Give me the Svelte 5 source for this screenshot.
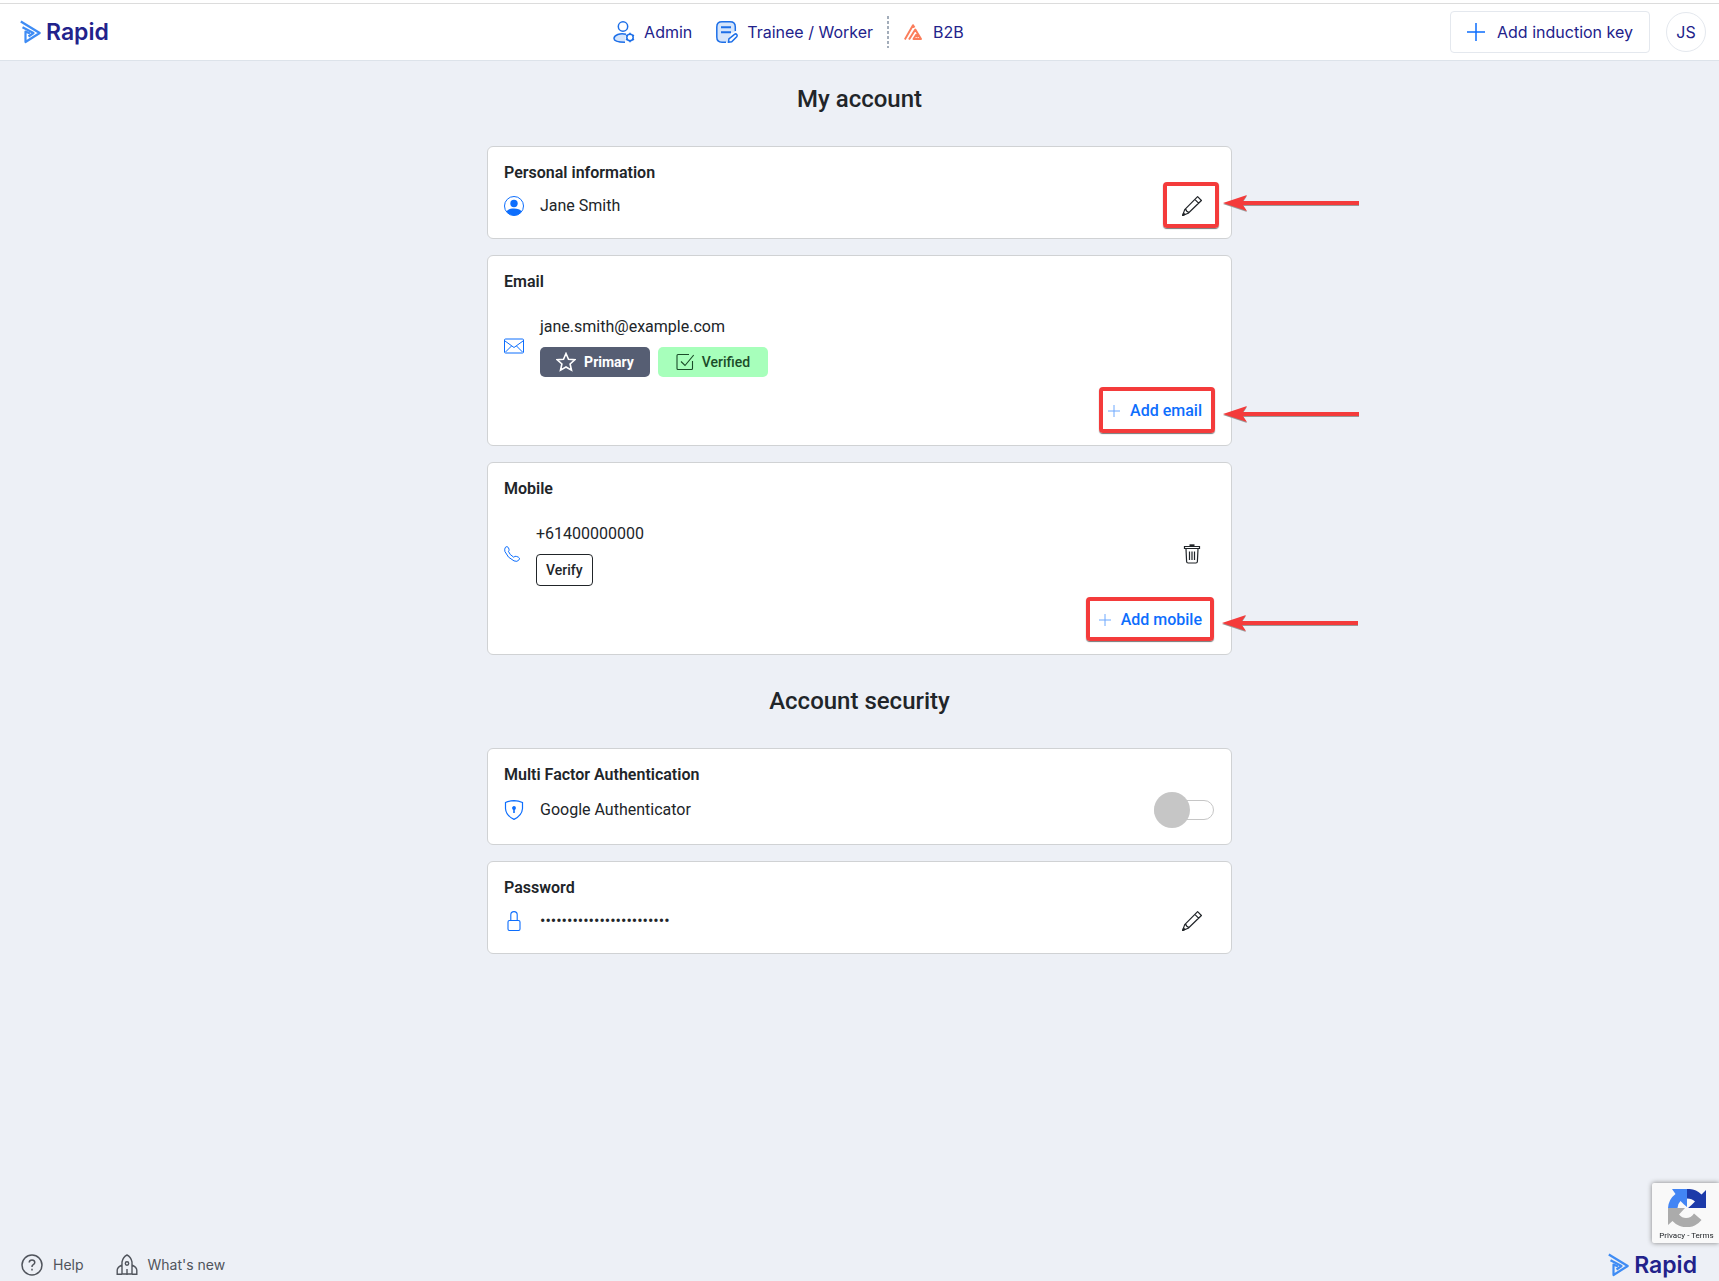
<script>
  let mfaEnabled = false;

  const user = {
    name: 'Jane Smith',
    initials: 'JS',
    email: 'jane.smith@example.com',
    mobile: '+61400000000',
  };
  const maskedPassword = '•'.repeat(24);
</script>

<svelte:head>
  <title>My account</title>
</svelte:head>

{#snippet logo()}
  <a class="logo" href="#home">
    <svg width="22" height="24" viewBox="0 0 22 24" fill="none" stroke="#3f8cf4" stroke-width="2.200" stroke-linejoin="round">
      <path d="M.8 1.500 19.700 13 5.500 22V11.500l4.500 2" />
      <path d="m2.500 7.300 11 5.700-5 3.500" />
    </svg>
    <span>Rapid</span>
  </a>
{/snippet}

{#snippet pencil()}
  <svg width="20" height="20" viewBox="0 0 20 20" fill="none" stroke="currentColor" stroke-width="1.200" stroke-linejoin="round">
    <path d="M15.600.7 19.400 4.500 6.200 17.300.7 19.400 2.700 13.600zM12.800 3.400l3.800 3.800M2.700 13.600l1.600.3.500 1.500 1.300.4.100 1.500" />
    <path d="m.7 19.400.8-2.300 1.400 1.400z" fill="currentColor" />
  </svg>
{/snippet}

{#snippet plus(size)}
  <svg width={size} height={size} viewBox="0 0 12 12" fill="none" stroke="currentColor" stroke-width="1">
    <path d="M6 0v12M0 6h12" />
  </svg>
{/snippet}

{#snippet arrow()}
  <svg class="arrow" width="136" height="20" viewBox="0 0 136 20" fill="#f43b3b">
    <path d="M0 10 24 2 20 8H136v4H20l4 6z" />
  </svg>
{/snippet}

<div class="page">
  <div class="strip"></div>
  <header>
    {@render logo()}
    <nav>
      <a href="#admin">
        <svg width="22" height="22" viewBox="0 0 22 22" fill="none" stroke="#1d6fe8" stroke-width="1.500">
          <circle cx="10" cy="5.500" r="4.700" />
          <path d="M13 13.200C7 11.600 1 14 1 17.500c0 2.600 3.500 3.700 11 3.700" fill="#d5e5fb" />
          <circle cx="17" cy="16.500" r="3.200" fill="#fff" />
          <path d="M17 11.800v1.500M17 19.700v1.500M13 14.200l1.300.7M19.700 18.100l1.300.8M13 18.900l1.300-.8M19.700 14.900l1.300-.7" />
        </svg>
        Admin
      </a>
      <a class="trainee" href="#trainee">
        <svg width="22" height="22" viewBox="0 0 22 22" fill="none" stroke="#1d6fe8" stroke-width="1.500">
          <path d="M19.300 11V6Q19.300.8 14 .8H6Q.8.8.8 6v10q0 5.200 5.200 5.200h6l3-9.200z" fill="#d5e5fb" stroke="none" />
          <path d="M19.300 10V6Q19.300.8 14 .8H6Q.8.8.8 6v10q0 5.200 5.200 5.200h4" />
          <path d="M5 6.200h10M5 11.200h10" stroke-width="2" />
          <path d="M18.500 13.400q1.300-1 2.200 0t0 2.300l-5 5-3.200.5.400-3.200z" fill="#fff" />
        </svg>
        Trainee / Worker
      </a>
      <span class="divider"></span>
      <a class="b2b" href="#b2b">
        <svg width="18" height="16" viewBox="0 0 18 16" fill="none" stroke="#fb7d5b" stroke-width="2" stroke-linejoin="round">
          <path d="M.8 15.500 9 1.200l1.500 2.300M5 15.500l6.300-10L17 15H9.500l2.700-4.200 1.600 2.700" />
        </svg>
        B2B
      </a>
    </nav>
    <div class="actions">
      <button class="induction" type="button">
        <span class="blue">{@render plus(18)}</span>
        Add induction key
      </button>
      <button class="avatar" type="button">{user.initials}</button>
    </div>
  </header>

  <main>
    <h1>My account</h1>

    <section class="card">
      <h2>Personal information</h2>
      <div class="row">
        <svg class="blue" width="20" height="20" viewBox="0 0 20 20" fill="currentColor">
          <circle cx="10" cy="10" r="9.500" fill="none" stroke="currentColor" />
          <circle cx="10" cy="7.500" r="3.700" />
          <path d="M2.500 15.500c1.200-2.200 4-3 7.500-3s6.300.8 7.500 3c-1.500 2.500-4.200 4-7.500 4s-6-1.500-7.500-4z" />
        </svg>
        <span>{user.name}</span>
        <button class="icon-button" type="button" aria-label="Edit name">{@render pencil()}</button>
      </div>
      <div class="callout name-callout">{@render arrow()}</div>
    </section>

    <section class="card">
      <h2>Email</h2>
      <div class="entry">
        <svg class="blue" width="20" height="16" viewBox="0 0 20 16" fill="none" stroke="currentColor">
          <rect x=".5" y="1" width="19" height="14" rx="1" />
          <path d="m1 3 9 6.500L19 3M1.500 14l6-6M18.500 14l-6-6" />
        </svg>
        <div>
          <div class="value">{user.email}</div>
          <div class="badges">
            <span class="badge primary">
              <svg width="20" height="20" viewBox="1 0 20 20" fill="none" stroke="currentColor" stroke-width="1.600">
                <path d="m11 1.500 2.500 5.700 6.300.6-4.700 4.200 1.400 6.200L11 15l-5.500 3.200L6.900 12 2.200 7.800l6.300-.6z" />
              </svg>
              Primary
            </span>
            <span class="badge verified">
              <svg width="18" height="18" viewBox="0 0 18 18" fill="none" stroke="currentColor" stroke-width="1.100">
                <path d="M13 1.500H2q-1 0-1 1v13q0 1 1 1h13.500q1 0 1-1V8M5 8.500l4 4L17.700 2" />
              </svg>
              Verified
            </span>
          </div>
        </div>
      </div>
      <div class="add-row">
        <button class="add" type="button">{@render plus(12)}Add email</button>
      </div>
      <div class="callout email-callout">{@render arrow()}</div>
    </section>

    <section class="card">
      <h2>Mobile</h2>
      <div class="entry">
        <svg class="blue" width="16" height="16" viewBox="0 0 16 16" fill="none" stroke="currentColor">
          <path d="M1.500 1.200Q3-.2 4.300 1.500L5 3.200Q5.500 4.400 4.400 5.300 5.500 8.800 9.800 11.300q1-1.500 2.500-.9l2 .7q2 1 .9 2.600-2 2.700-5.200 1.200Q3.500 12 .9 5.500.2 3 1.500 1.200z" />
        </svg>
        <div>
          <div class="value">{user.mobile}</div>
          <button class="verify" type="button">Verify</button>
        </div>
        <button class="icon-button" type="button" aria-label="Delete mobile">
          <svg width="20" height="20" viewBox="0 0 20 20" fill="none" stroke="currentColor" stroke-width="1.200">
            <path d="M2.500 2.500h15v2h-15zM4 5l.6 12.500q.1 1.500 1.500 1.500h7.800q1.400 0 1.500-1.500L16 5" />
            <path d="M7.500 1.300h5" stroke-width="2" />
            <path d="M7.500 7.500v8.500M10 7.500v8.500M12.500 7.500v8.500" />
          </svg>
        </button>
      </div>
      <div class="add-row">
        <button class="add" type="button">{@render plus(12)}Add mobile</button>
      </div>
      <div class="callout mobile-callout">{@render arrow()}</div>
    </section>

    <h1>Account security</h1>

    <section class="card">
      <h2>Multi Factor Authentication</h2>
      <div class="row tall">
        <svg class="blue" width="20" height="20" viewBox="0 0 20 20" fill="none" stroke="currentColor" stroke-width="1.200">
          <path d="M10 .7Q14.500.8 18.500 2.500v6Q18 15.500 10 19.400 2 15.500 1.500 8.500v-6Q5.500.8 10 .7z" />
          <circle cx="10" cy="8" r="1.300" fill="currentColor" />
          <path d="M10 8v5" stroke-width="1.600" />
        </svg>
        <label for="mfa">Google Authenticator</label>
        <input id="mfa" class="toggle" type="checkbox" bind:checked={mfaEnabled} />
      </div>
    </section>

    <section class="card">
      <h2>Password</h2>
      <div class="row">
        <svg class="blue" width="20" height="20" viewBox="0 0 20 20" fill="none" stroke="currentColor" stroke-width="1.100">
          <rect x="4" y="9.500" width="12" height="10" rx="1.500" />
          <path d="M6.800 9.500V3.800q0-3.200 3.200-3.200t3.200 3.200v5.700" />
        </svg>
        <span>{maskedPassword}</span>
        <button class="icon-button" type="button" aria-label="Edit password">{@render pencil()}</button>
      </div>
    </section>
  </main>

  <footer>
    <a class="foot-link" href="#help">
      <svg width="22" height="22" viewBox="0 0 22 22" fill="none" stroke="currentColor" stroke-width="1.500">
        <circle cx="11" cy="11" r="10" />
        <path d="M8.200 8.500Q8.400 6 11 6t2.800 2.300q0 1.500-1.500 2.300T11 13" />
        <path d="M11 14.800v1.600" />
      </svg>
      Help
    </a>
    <a class="foot-link" href="#news">
      <svg width="22" height="22" viewBox="0 0 22 22" fill="none" stroke="currentColor" stroke-width="1.400">
        <path d="M6 20V8q1-5 5-7 4 2 5 7v12zM6 11q-4.500 2-4.800 5v4.200H6M16 11q4.500 2 4.800 5v4.200H16" />
        <circle cx="11" cy="9.500" r="1.700" />
        <path d="M11 15v6" />
      </svg>
      What's new
    </a>
    {@render logo()}
  </footer>

  <aside class="captcha">
    <svg width="38" height="38" viewBox="0 0 38 38">
      <path d="M38 19V1l-4.500 4.500A19 19 0 0 0 19 0v9.500q5 0 8 3L23.500 16 20 19z" fill="#1c3aa9" />
      <path d="M19 0H4l3.500 5A19 19 0 0 0 0 19h9.500q0-4 3-7l3.500 3.500L19 18z" fill="#4285f4" />
      <path d="M0 19v17l4.500-4A19 19 0 0 0 33.500 31L26 24.500q-3 4.500-8 4.500-4 0-7-3.500L17 19z" fill="#ababab" />
    </svg>
    <span><a href="#privacy">Privacy</a> - <a href="#terms">Terms</a></span>
  </aside>
</div>

<style>
  :global(body) {
    margin: 0;
    background: #edf0f6;
  }

  .page {
    display: flex;
    flex-direction: column;
    min-height: 100vh;
    color: #212529;
    font-family: Roboto, sans-serif;
    font-size: 16px;
    line-height: 24px;
  }

  svg {
    display: block;
    flex: none;
  }

  a {
    color: inherit;
    text-decoration: none;
  }

  button {
    font: inherit;
    color: inherit;
    background: none;
    border: 0;
    padding: 0;
    cursor: pointer;
  }

  .blue {
    color: #0d6efd;
  }

  .strip {
    height: 3px;
    background: #fff;
    border-bottom: 1px solid #dcdcdc;
  }

  header {
    display: flex;
    align-items: center;
    justify-content: space-between;
    box-sizing: border-box;
    height: 57px;
    padding: 0 13px 1px 20px;
    background: #fff;
    border-bottom: 1px solid #dde3ea;
    color: #22228b;
    font-family: Inter, sans-serif;
  }

  .logo {
    display: flex;
    align-items: center;
    gap: 4px;
    color: #22228b;
    font-family: Inter, sans-serif;
    font-size: 23px;
    font-weight: 600;
    line-height: 24px;
  }

  nav,
  nav a,
  .actions,
  .induction {
    display: flex;
    align-items: center;
  }

  nav {
    padding-left: 18px;
  }

  nav a {
    gap: 9px;
  }

  .trainee {
    margin-left: 24px;
  }

  .divider {
    width: 2px;
    height: 32px;
    margin: 0 15px 0 14px;
    background: repeating-linear-gradient(#a3adba 0 3px, transparent 3px 5px);
  }

  nav .b2b {
    gap: 11px;
  }

  .actions {
    gap: 16px;
  }

  .induction {
    gap: 12px;
    height: 42px;
    padding: 0 16px;
    border: 1px solid #e4e8ee;
    border-radius: 4px;
  }

  .avatar {
    width: 40px;
    height: 40px;
    border: 1px solid #e4e8ee;
    border-radius: 50%;
  }

  main {
    box-sizing: border-box;
    width: 100%;
    max-width: 745px;
    margin: 0 auto;
    padding-top: 23px;
  }

  h1 {
    margin: 0 0 32px;
    font-size: 24px;
    font-weight: 500;
    line-height: 30px;
    text-align: center;
  }

  .card + h1 {
    margin-top: 31px;
  }

  .card {
    position: relative;
    padding: 16px 17px 10px 16px;
    background: #fff;
    border: 1px solid #d0d2d4;
    border-radius: 6px;
  }

  .card + .card {
    margin-top: 16px;
  }

  h2 {
    margin: 0;
    font-size: 16px;
    font-weight: 600;
    line-height: 20px;
  }

  .row {
    display: flex;
    align-items: center;
    gap: 16px;
    height: 44px;
    margin-top: 1px;
  }

  .row.tall {
    height: 48px;
  }

  .entry {
    display: flex;
    align-items: center;
    gap: 16px;
    margin-top: 23px;
  }

  .icon-button {
    margin-left: auto;
    padding: 12px;
  }

  .value {
    margin-bottom: 8px;
  }

  .badges {
    display: flex;
    gap: 8px;
  }

  .badge {
    display: flex;
    align-items: center;
    justify-content: center;
    gap: 8px;
    box-sizing: border-box;
    width: 110px;
    height: 30px;
    border-radius: 5px;
    font-size: 14px;
  }

  .primary {
    background: #565e73;
    color: #fff;
    font-weight: 700;
  }

  .verified {
    background: #a7ffbb;
    color: #1b4c29;
    font-weight: 500;
  }

  .verify {
    height: 32px;
    padding: 0 9px;
    border: 1px solid #212529;
    border-radius: 4px;
    font-size: 14px;
    font-weight: 500;
  }

  .add-row {
    display: flex;
    justify-content: flex-end;
    margin: 14px 0 4px;
  }

  .add {
    display: flex;
    align-items: center;
    gap: 10px;
    height: 40px;
    padding: 0 12px 0 9px;
    color: #0d6efd;
    font-weight: 500;
  }

  .add svg {
    opacity: 0.6;
  }

  .toggle {
    appearance: none;
    display: flex;
    align-items: center;
    box-sizing: border-box;
    width: 60px;
    height: 20px;
    margin: 0 0 0 auto;
    border: 1px solid #c6c6c6;
    border-radius: 10px;
    cursor: pointer;
  }

  .toggle::before {
    content: '';
    flex: none;
    width: 36px;
    height: 36px;
    margin-left: -1px;
    border-radius: 50%;
    background: #c6c6c6;
  }

  .toggle:checked::before {
    margin-left: 23px;
    background: #0d6efd;
  }

  /* Red guide boxes with an arrow pointing at them */
  .callout {
    position: absolute;
    right: 12px;
    box-sizing: border-box;
    border: 4px solid #f43b3b;
    border-radius: 4px;
    box-shadow: 0 1px 1px #777;
    pointer-events: none;
  }

  .arrow {
    position: absolute;
    top: 50%;
    left: 100%;
    margin: -12px 0 0 8px;
    filter: drop-shadow(0 1px 0 #999);
  }

  .name-callout {
    top: 35px;
    width: 56px;
    height: 46px;
  }

  .email-callout {
    right: 16px;
    bottom: 12px;
    width: 116px;
    height: 46px;
  }

  .mobile-callout {
    right: 17px;
    bottom: 13px;
    width: 128px;
    height: 44px;
  }

  .email-callout .arrow,
  .mobile-callout .arrow {
    margin: -6px 0 0 12px;
  }

  footer {
    display: flex;
    align-items: center;
    gap: 32px;
    height: 32px;
    margin-top: auto;
    padding: 0 22px 0 21px;
    color: #50545c;
    font-family: Inter, sans-serif;
    font-size: 14px;
  }

  .foot-link {
    display: flex;
    align-items: center;
    gap: 10px;
  }

  footer .logo {
    margin-left: auto;
  }

  .captcha {
    position: fixed;
    right: 0;
    bottom: 38px;
    display: flex;
    flex-direction: column;
    align-items: center;
    gap: 4px;
    box-sizing: border-box;
    width: 67px;
    height: 60px;
    padding: 6px 0 0 2px;
    background: #f9f9f9;
    border-radius: 2px 0 0 2px;
    box-shadow: 0 0 5px #808080;
    font-size: 8px;
    line-height: 10px;
    white-space: nowrap;
  }
</style>
